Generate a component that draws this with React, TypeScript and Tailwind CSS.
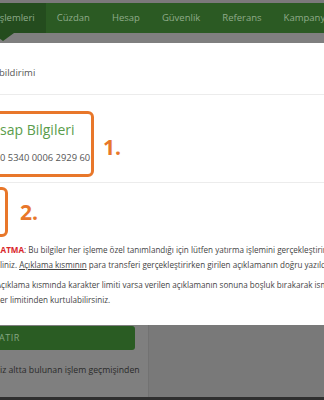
import React from "react";

export default function App() {
  const tabs = ["Cüzdan", "Hesap", "Güvenlik", "Referans", "Kampanyalar"];
  return (
    <div className="w-[324px] h-[400px] overflow-hidden bg-[#7f7f7f] font-['Open_Sans',sans-serif] flex flex-col">
      <div className="h-[3px] bg-[#7b797b] shrink-0" />
      <nav className="h-[30px] shrink-0 bg-[#2b5a23] flex items-stretch text-[9.5px] text-[#8fab8a] whitespace-nowrap overflow-visible relative z-10">
        <div className="relative -ml-[11px] px-[11px] bg-[#244c1e] flex items-center">
          <span className="-ml-[3px]">İşlemleri</span>
          <span className="absolute left-[3px] top-[30px] w-0 h-0 border-l-[11px] border-r-[11px] border-t-[8px] border-l-transparent border-r-transparent border-t-[#244c1e]" />
        </div>
        {tabs.map((t) => (
          <div key={t} className="px-[11px] flex items-center">
            {t}
          </div>
        ))}
      </nav>
      <div className="h-[10px] shrink-0 bg-[#7f7f7f]" />
      <div className="h-[282px] shrink-0 bg-white overflow-hidden">
        <div className="h-[52px] border-b border-[#ececec] pt-[24px]">
          <div className="text-[9.5px] leading-[12px] text-[#555] -ml-[1px] whitespace-nowrap">bildirimi</div>
        </div>
        <div className="border-b border-[#ececec] pt-[16px] pb-[5px] flex items-center">
          <div className="-ml-[10px] w-[104px] h-[66px] border-[3px] border-[#e8772a] rounded-[6px] pl-[7px] shrink-0 whitespace-nowrap">
            <div className="mt-[6px] text-[14px] leading-[20px] text-[#5a9d4c]">sap Bilgileri</div>
            <div className="mt-[12px] text-[9.4px] leading-[12px] text-[#555]">0 5340 0006 2929 60</div>
          </div>
          <div className="ml-[9px] mt-[6px] text-[21px] leading-[24px] font-bold text-[#e8772a]">1.</div>
        </div>
        <div className="pt-[4px] flex items-center">
          <div className="-ml-[20px] w-[28px] h-[50px] border-[3px] border-[#e8772a] rounded-[6px] shrink-0" />
          <div className="ml-[12px] text-[21px] leading-[24px] font-bold text-[#e8772a]">2.</div>
        </div>
        <div className="mt-[5px] text-[8.1px] leading-[15px] text-[#444] whitespace-nowrap">
          <div className="-ml-[4px]">
            <span className="font-bold text-[#d9262b]">LATMA</span>
            : Bu bilgiler her işleme özel tanımlandığı için lütfen yatırma işlemini gerçekleştiriniz
          </div>
          <div>
            liniz. <span className="underline">Açıklama kısmının</span> para transferi gerçekleştirirken girilen açıklamanın doğru yazıldığından
          </div>
          <div className="mt-[5px] -ml-[4px]">
            Açıklama kısmında karakter limiti varsa verilen açıklamanın sonuna boşluk bırakarak isminizi
          </div>
          <div>er limitinden kurtulabilirsiniz.</div>
        </div>
      </div>
      <div className="flex-1 flex min-h-0">
        <div className="w-[148px] shrink-0 bg-[#7f7f7f] whitespace-nowrap overflow-hidden">
          <div className="mt-[1px] h-[24px] w-[135px] bg-[#2a5c23] rounded-r-[3px] flex items-center text-[9px] text-[#86a882] tracking-[0.5px]">
            <span className="-ml-[1px]">ATIR</span>
          </div>
          <div className="mt-[14px] text-[8.7px] leading-[12px] text-[#2a2a2a]">iz altta bulunan işlem geçmişinden</div>
        </div>
        <div className="flex-1 border-l border-[#727272] bg-[#797979]" />
      </div>
      <div className="h-[3px] shrink-0 bg-[#2f2f2f]" />
    </div>
  );
}
